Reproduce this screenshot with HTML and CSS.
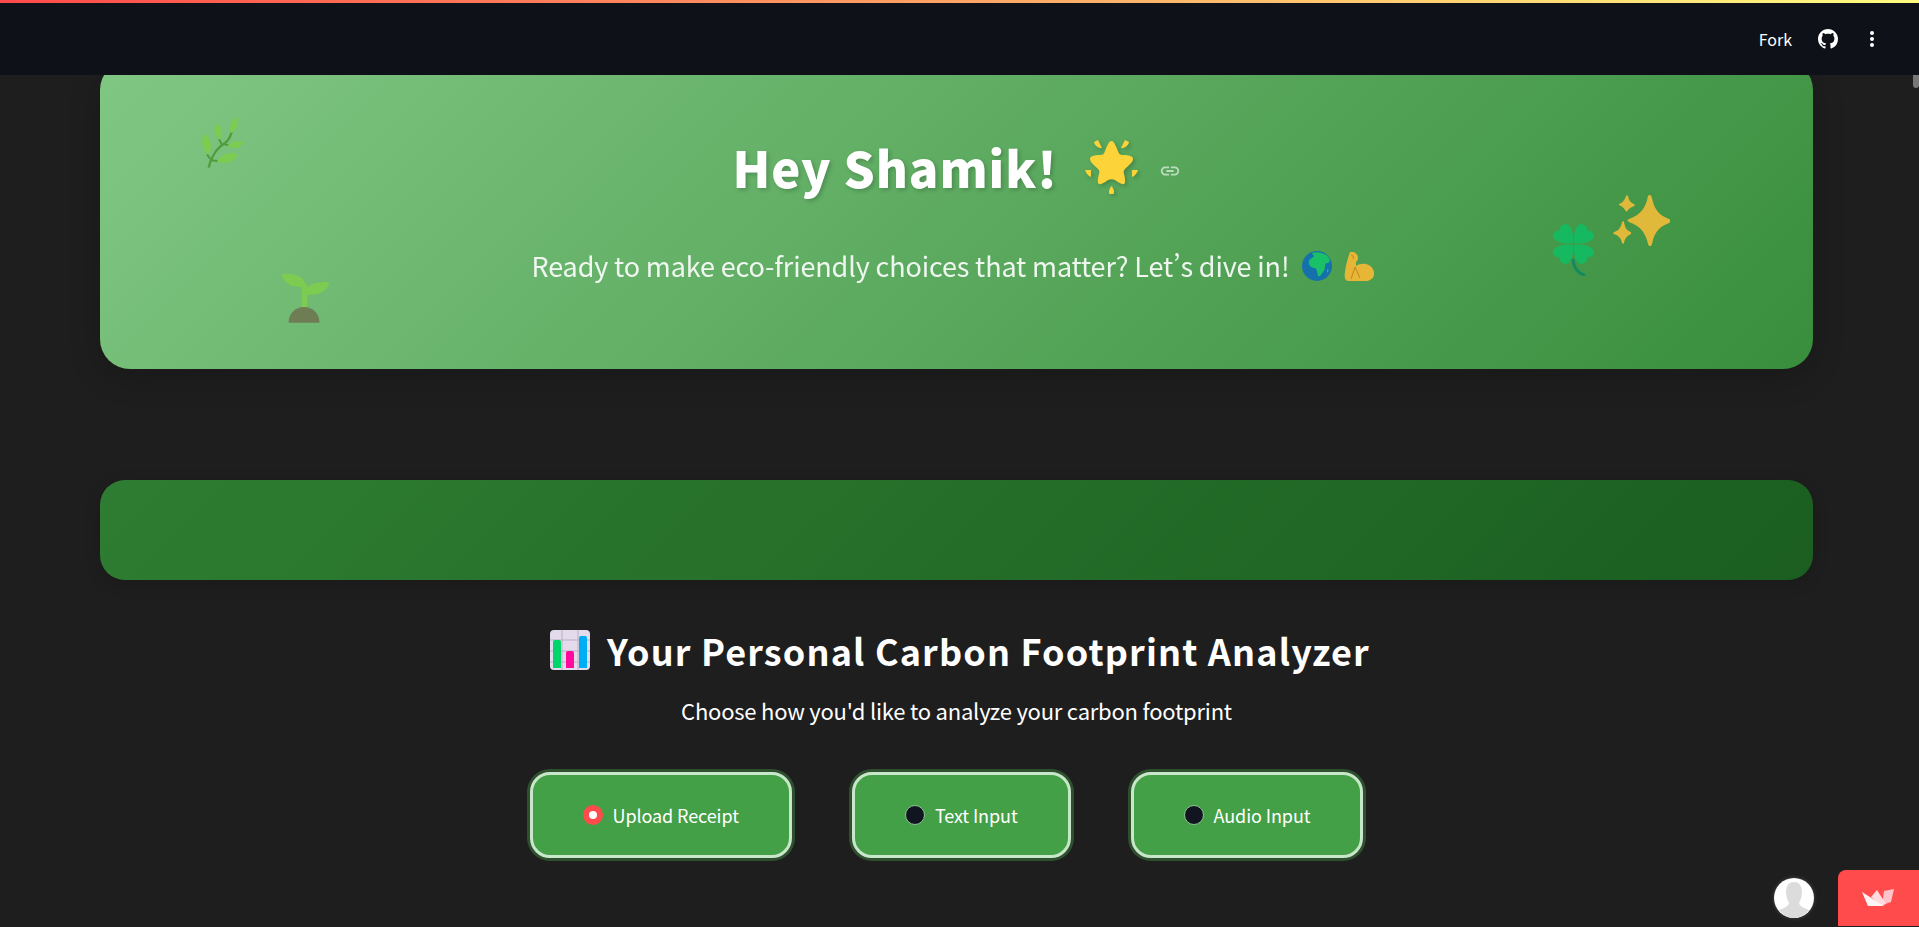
FILE: index.html
```html
<!DOCTYPE html>
<html lang="en">
  <head>
    <meta charset="UTF-8" />
    <meta name="viewport" content="width=device-width, initial-scale=1.0" />
    <title>Carbon Footprint Analyzer</title>
    <link rel="stylesheet" href="styles.css">
  </head>
  <body>
    <div class="app">
      <header class="topbar">
        <a class="fork">Fork</a>
        <svg class="github" viewBox="0 0 16 16" fill="#fff"><path d="M8 0C3.58 0 0 3.58 0 8c0 3.54 2.29 6.53 5.47 7.59.4.07.55-.17.55-.38 0-.19-.01-.82-.01-1.49-2.01.37-2.53-.49-2.69-.94-.09-.23-.48-.94-.82-1.13-.28-.15-.68-.52-.01-.53.63-.01 1.08.58 1.23.82.72 1.21 1.87.87 2.33.66.07-.52.28-.87.51-1.07-1.78-.2-3.64-.89-3.64-3.95 0-.87.31-1.59.82-2.15-.08-.2-.36-1.02.08-2.12 0 0 .67-.21 2.2.82.64-.18 1.32-.27 2-.27.68 0 1.36.09 2 .27 1.53-1.04 2.2-.82 2.2-.82.44 1.1.16 1.92.08 2.12.51.56.82 1.27.82 2.15 0 3.07-1.87 3.75-3.65 3.95.29.25.54.73.54 1.48 0 1.07-.01 1.93-.01 2.2 0 .21.15.46.55.38A8.013 8.013 0 0016 8c0-4.42-3.58-8-8-8z"/></svg>
        <svg class="dots" viewBox="0 0 6 20" fill="#fff"><circle cx="3" cy="4" r="2"/><circle cx="3" cy="10" r="2"/><circle cx="3" cy="16" r="2"/></svg>
      </header>

      <main class="content">
        <section class="hero">
          <!-- floating decorations -->
          <svg class="deco herb" viewBox="55 40 135 165">
            <path d="M81 198 C86 170 105 140 125 128 C138 120 146 105 150 92" fill="none" stroke="#4f9d3a" stroke-width="7"/>
            <path d="M86 176 L108 178 M76 158 L86 172 M112 112 L120 128 M125 128 L140 130" fill="none" stroke="#4f9d3a" stroke-width="6"/>
            <path d="M107 178 C118 156 150 150 168 158 C160 182 128 192 107 178Z" fill="#7dcb50"/>
            <path d="M139 132 C150 118 172 116 187 122 C178 138 155 146 139 132Z" fill="#7dcb50"/>
            <path d="M78 158 C60 140 56 115 68 96 C85 108 98 135 78 158Z" fill="#7dcb50"/>
            <path d="M113 114 C98 100 92 80 108 65 C122 78 128 98 113 114Z" fill="#7dcb50"/>
            <path d="M148 94 C140 78 148 55 164 47 C173 65 168 84 148 94Z" fill="#7dcb50"/>
          </svg>
          <svg class="deco seedling" viewBox="300 515 152 155">
            <rect x="366" y="550" width="16" height="80" fill="#7dcb50"/>
            <path d="M303 520 C340 515 378 525 378 558 C340 562 315 552 303 520Z" fill="#7dcb50"/>
            <path d="M450 545 C420 540 378 548 372 582 C410 586 440 578 450 545Z" fill="#7dcb50"/>
            <path d="M326 668 C326 640 346 620 373 620 C400 620 420 640 420 668Z" fill="#6f7d55"/>
          </svg>
          <svg class="deco clover" viewBox="0 0 41 52">
            <path d="M20 36 C21 44 25 49 31 51" fill="none" stroke="#128a62" stroke-width="3" stroke-linecap="round"/>
            <g fill="#16b95f">
              <path d="M20 19 C10 21 1 17 0 12 C0 8 4 6 7 7 C6 3 9 0 13 0 C18 1 21 9 20 19Z"/>
              <path d="M21 19 C31 21 40 17 41 12 C41 8 37 6 34 7 C35 3 32 0 28 0 C23 1 20 9 21 19Z"/>
              <path d="M20 21 C10 19 1 23 0 28 C0 32 4 34 7 33 C6 37 9 40 13 40 C18 39 21 31 20 21Z"/>
              <path d="M21 21 C31 19 40 23 41 28 C41 32 37 34 34 33 C35 37 32 40 28 40 C23 39 20 31 21 21Z"/>
            </g>
          </svg>
          <svg class="deco sparkles" viewBox="0 0 57 51" fill="#e0b83a">
            <path d="M35 1 C37 -1 38 0 39 3 C41 13 45 20 56 24 C58 25 58 27 56 28 C45 32 41 39 39 49 C38 52 36 52 35 49 C33 39 28 31 16 27 C14 26 14 25 16 24 C28 20 33 12 35 1Z"/>
            <path d="M13 1 C14 0 15 0 15 1 C16 6 18 8 21 9 C22 10 22 10 21 11 C18 12 16 14 15 15 C14 17 13 17 12 15 C11 13 9 11 6 10 C6 10 6 9 6 9 C9 8 12 5 13 1Z"/>
            <path d="M9 27 C10 26 11 26 11 27 C12 33 14 36 18 37 C18 38 18 39 18 39 C14 41 12 43 11 48 C11 49 10 49 9 48 C8 43 6 41 1 39 C0 39 0 38 1 37 C5 36 8 33 9 27Z"/>
          </svg>

          <h1 class="hero-title">
            <span>Hey Shamik!</span>
            <svg class="star" viewBox="0 0 53 54" fill="#fdd33a">
              <path d="M26.5 1 C29 1 31 6 33 11 C34 14 35 15 38 15 C44 15 48 16 48 19 C48 22 44 25 41 28 C39 30 38 31 39 34 C40 38 41 43 39 44 C37 45 33 42 30 40 C28 39 25 39 23 40 C20 42 16 45 14 44 C12 43 13 38 14 34 C15 31 14 30 12 28 C9 25 5 22 5 19 C5 16 9 15 15 15 C18 15 19 14 20 11 C22 6 24 1 26.5 1Z"/>
              <path d="M9 2 L13 0 L17 8 C13 8 10 6 9 2Z"/>
              <path d="M44 2 L40 0 L36 8 C40 8 43 6 44 2Z"/>
              <path d="M0 30 L6 30 L6 37 C3 36 1 33 0 30Z"/>
              <path d="M53 30 L47 30 L47 37 C50 36 52 33 53 30Z"/>
              <path d="M26.5 46 C28 48 30 51 28.5 54 L24.5 54 C23 51 25 48 26.5 46Z"/>
            </svg>
            <svg class="link" viewBox="0 0 24 24" fill="#fff"><path d="M3.9 12c0-1.71 1.39-3.1 3.1-3.1h4V7H7c-2.76 0-5 2.24-5 5s2.24 5 5 5h4v-1.9H7c-1.71 0-3.1-1.39-3.1-3.1zM8 13h8v-2H8v2zm9-6h-4v1.9h4c1.71 0 3.1 1.39 3.1 3.1s-1.39 3.1-3.1 3.1h-4V17h4c2.76 0 5-2.24 5-5s-2.24-5-5-5z"/></svg>
          </h1>
          <p class="hero-sub">
            <span>Ready to make eco-friendly choices that matter? Let’s dive in!</span>
            <svg class="globe" viewBox="0 0 30 30">
              <circle cx="15" cy="15" r="15" fill="#0f6db5"/>
              <path d="M10 2 C15 0 24 2 27 7 C29 11 26 13 24 12 C22 15 24 18 21 21 C19 24 18 26 16 25 C15 21 15 18 13 17 C9 17 6 14 7 10 C8 7 11 7 12 5 C11 4 10 3 10 2Z" fill="#14c46b"/>
              <path d="M25 18 L27 19 L25 22Z" fill="#14c46b"/>
            </svg>
            <svg class="muscle" viewBox="0 0 30 29">
              <path d="M6 0 C10 -1 14 2 14 6 C14 8 13 9 12 10 L12 14 C17 10 28 11 30 20 C31 26 26 29 21 29 L5 29 C1 29 0 26 1 20 C2 12 4 6 6 0Z" fill="#f9b935"/>
              <path d="M7 3 C9 3 10 5 9 7 M11 15 L7 27 M11 15 L16 26" fill="none" stroke="#d98a1e" stroke-width="1.1"/>
            </svg>
          </p>
        </section>

        <section class="band"></section>

        <section class="analyzer">
          <h2 class="analyzer-title">
            <svg class="chart" viewBox="0 0 40 40">
              <rect width="40" height="40" rx="4" fill="#e3dbec"/>
              <path d="M0 10 H40 M0 21 H40 M0 32 H40 M12 0 V40 M28 0 V40" stroke="#b9b0c4" stroke-width="1"/>
              <path d="M3 12 a2 2 0 0 1 2 -2 h4 a2 2 0 0 1 2 2 v26 h-8z" fill="#00d46a"/>
              <path d="M16 23 a2 2 0 0 1 2 -2 h4 a2 2 0 0 1 2 2 v15 h-8z" fill="#ff0a9c"/>
              <path d="M29 8 a2 2 0 0 1 2 -2 h4 a2 2 0 0 1 2 2 v30 h-8z" fill="#00aef5"/>
            </svg>
            <span>Your Personal Carbon Footprint Analyzer</span>
          </h2>
          <p class="analyzer-sub">Choose how you'd like to analyze your carbon footprint</p>
          <div class="modes">
            <label class="mode"><span class="radio radio-on"></span>Upload Receipt</label>
            <label class="mode"><span class="radio"></span>Text Input</label>
            <label class="mode"><span class="radio"></span>Audio Input</label>
          </div>
        </section>
      </main>
    </div>

    <div class="scroll-thumb"></div>
    <div class="avatar">
      <svg viewBox="0 0 40 40">
        <circle cx="20" cy="20" r="20" fill="#fff"/>
        <path d="M20 4 C26 4 28 9 28 14 C28 19 26 23 25 25 C25 28 30 30 35 32 C31 37 26 40 20 40 C14 40 9 37 5 32 C10 30 15 28 15 25 C14 23 12 19 12 14 C12 9 14 4 20 4Z" fill="#dcdcdc"/>
      </svg>
    </div>
    <div class="hosted">
      <svg viewBox="0 0 32 18">
        <path d="M22 2 L32 0 L29 13 L20 16Z" fill="#ffc4cb"/>
        <path d="M15 1 L24 15 L19 17 L9 8Z" fill="#ffdbe0"/>
        <path d="M0 3 L22 17 L6 17Z" fill="#fff4f5"/>
      </svg>
    </div>
  </body>
</html>
```

FILE: styles.css
```css
html,
body {
  margin: 0;
  height: 100%;
  overflow: hidden;
}
body {
  background: #1e1e1e;
  color: #fff;
  font-family: "Noto Sans CJK SC", "Noto Sans", sans-serif;
  font-feature-settings: "pwid";
}
.app {
  display: flex;
  flex-direction: column;
  height: 100%;
}
.topbar {
  flex: none;
  height: 72px;
  border-top: 3px solid;
  border-image: linear-gradient(90deg, #ff4b4b, #fffd80) 1;
  background: #0e1117;
  display: flex;
  align-items: center;
  justify-content: flex-end;
  position: relative;
  z-index: 2;
}
.fork {
  font-size: 16px;
  margin-right: 26px;
}
.github {
  width: 20px;
  height: 20px;
  margin-right: 31px;
}
.dots {
  width: 6px;
  height: 20px;
  margin-right: 44px;
}
.content {
  flex: 1;
  min-height: 0;
  padding: 0 106px 0 100px;
}
.hero {
  position: relative;
  height: 309px;
  margin-top: -15px;
  border-radius: 30px;
  background: linear-gradient(135deg, #81c784, #388e3c);
  box-shadow: 0 8px 32px rgba(0, 0, 0, 0.2);
  text-align: center;
  box-sizing: border-box;
  padding-top: 71px;
}
.deco {
  position: absolute;
}
.herb {
  left: 100px;
  top: 55px;
  width: 45px;
  height: 55px;
}
.seedling {
  left: 180px;
  top: 212px;
  width: 50px;
  height: 52px;
}
.clover {
  left: 1453px;
  top: 164px;
  width: 41px;
  height: 52px;
}
.sparkles {
  left: 1513px;
  top: 135px;
  width: 57px;
  height: 51px;
}
.hero-title {
  margin: 0;
  height: 72px;
  display: flex;
  align-items: center;
  justify-content: center;
  font-size: 49px;
  font-weight: 900;
  line-height: 72px;
  letter-spacing: 0.9px;
  text-shadow: 2px 2px 4px rgba(0, 0, 0, 0.2);
}
.star {
  width: 53px;
  height: 54px;
  margin-left: 27px;
  filter: drop-shadow(2px 2px 2px rgba(0, 0, 0, 0.2));
}
.link {
  width: 22px;
  height: 22px;
  margin-left: 21px;
  margin-top: 8px;
  opacity: 0.6;
}
.hero-sub {
  margin: 43px 0 0;
  padding-right: 7px;
  display: flex;
  align-items: center;
  justify-content: center;
  font-size: 27px;
  line-height: 40px;
  letter-spacing: -0.14px;
  opacity: 0.9;
}
.globe {
  width: 30px;
  height: 30px;
  margin-left: 13px;
}
.muscle {
  width: 30px;
  height: 29px;
  margin-left: 12px;
}
.band {
  height: 100px;
  margin-top: 111px;
  border-radius: 25px;
  background: linear-gradient(135deg, #2e7d32, #1b5e20);
  box-shadow: 0 4px 16px rgba(0, 0, 0, 0.15);
}
.analyzer {
  text-align: center;
}
.analyzer-title {
  margin: 45px 0 0;
  padding-left: 7px;
  display: flex;
  align-items: center;
  justify-content: center;
  font-size: 36px;
  line-height: 50px;
  font-weight: 700;
  letter-spacing: 1.15px;
}
.chart {
  width: 40px;
  height: 40px;
  margin-right: 17px;
}
.analyzer-sub {
  margin: 19px 0 0;
  font-size: 22px;
  line-height: 32px;
  letter-spacing: -0.22px;
}
.modes {
  display: flex;
  justify-content: center;
  gap: 40px;
  margin-top: 46px;
}
.mode {
  display: flex;
  align-items: center;
  height: 86px;
  box-sizing: border-box;
  padding: 0 50px;
  margin-right: 20px;
  border: 3px solid #c8e6c9;
  border-radius: 20px;
  background: #43a047;
  box-shadow: 0 0 0 3px rgba(76, 175, 80, 0.35);
  font-size: 18px;
  letter-spacing: -0.1px;
}
.radio {
  width: 20px;
  height: 20px;
  margin-right: 10px;
  border-radius: 50%;
  background: #11151f;
  box-sizing: border-box;
  border: 1px solid #8fc398;
}
.radio-on {
  background: #fff;
  border: 6px solid #ff4b4b;
}
.scroll-thumb {
  position: fixed;
  top: 75px;
  right: 0;
  width: 6px;
  height: 13px;
  background: #777;
  border-radius: 0 0 3px 3px;
}
.avatar {
  position: fixed;
  left: 1774px;
  top: 878px;
  width: 40px;
  height: 40px;
  border-radius: 50%;
  box-shadow: 0 0 4px rgba(255, 255, 255, 0.2);
}
.avatar svg {
  display: block;
}
.hosted {
  position: fixed;
  left: 1838px;
  top: 870px;
  width: 81px;
  height: 56px;
  padding-right: 2px;
  box-sizing: border-box;
  background: #ff4b4b;
  border-top-left-radius: 8px;
  display: flex;
  align-items: center;
  justify-content: center;
}
.hosted svg {
  width: 32px;
  height: 18px;
}
```
